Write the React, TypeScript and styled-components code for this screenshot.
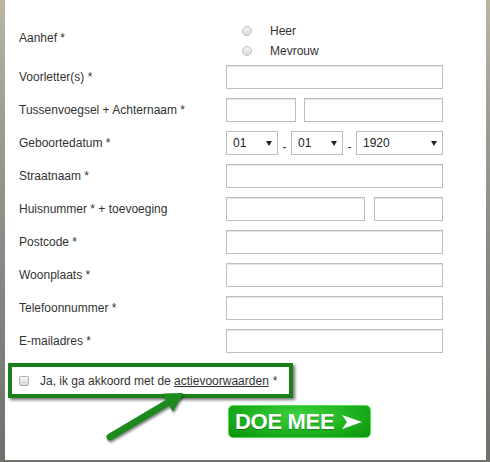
import styled, { createGlobalStyle } from "styled-components";

const GlobalStyle = createGlobalStyle`
  html, body {
    margin: 0;
    padding: 0;
  }
  body {
    width: 490px;
    height: 462px;
    overflow: hidden;
    background: linear-gradient(to bottom, #bab6a2 0%, #a09e92 25%, #8a8a85 55%, #6f6f6b 100%);
    font-family: "Liberation Sans", Arial, sans-serif;
  }
`;

const Panel = styled.form`
  margin-left: 5px;
  width: 481px;
  height: 460px;
  background: #fff;
  padding-top: 21px;
  box-sizing: border-box;
`;

const Row = styled.div<{ $tall?: boolean }>`
  display: flex;
  align-items: ${(p) => (p.$tall ? "flex-start" : "center")};
  margin-left: 14px;
  margin-bottom: ${(p) => (p.$tall ? "4px" : "9px")};
  height: ${(p) => (p.$tall ? "40px" : "24px")};
`;

const Label = styled.label<{ $tall?: boolean }>`
  width: 207px;
  font-size: 12px;
  line-height: 14px;
  color: #333;
  padding-top: ${(p) => (p.$tall ? "10px" : "0")};
`;

const Field = styled.div<{ $gap?: number }>`
  display: flex;
  align-items: center;
  width: 217px;
  gap: ${(p) => p.$gap ?? 8}px;
`;

const RadioList = styled.div`
  display: flex;
  flex-direction: column;
  padding-left: 16px;
`;

const RadioLine = styled.label`
  display: flex;
  align-items: center;
  height: 20px;
  gap: 18px;
  font-size: 12px;
  color: #333;
`;

const RadioDot = styled.span`
  width: 10px;
  height: 10px;
  border-radius: 50%;
  box-sizing: border-box;
  border: 1px solid #c2c2c2;
  background: linear-gradient(to bottom, #f4f4f4, #dadada);
`;

const TextInput = styled.input<{ $w?: number }>`
  width: ${(p) => (p.$w ? `${p.$w}px` : "100%")};
  height: 24px;
  box-sizing: border-box;
  border: 1px solid #bdbdbd;
  box-shadow: inset 0 1px 0 #e6e6e6;
  padding: 0 5px;
  font: 12px "Liberation Sans", Arial, sans-serif;
  outline: none;
  flex: none;
`;

const SelectWrap = styled.div<{ $w: number }>`
  position: relative;
  width: ${(p) => p.$w}px;
  height: 24px;
  flex: none;
`;

const Select = styled.select`
  appearance: none;
  width: 100%;
  height: 24px;
  box-sizing: border-box;
  border: 1px solid #bdbdbd;
  border-radius: 0;
  background: #fff;
  padding: 0 0 0 6px;
  font: 12px "Liberation Sans", Arial, sans-serif;
  color: #222;
  outline: none;
`;

const Caret = styled.span`
  position: absolute;
  right: 6px;
  top: 10px;
  width: 0;
  height: 0;
  border-left: 3px solid transparent;
  border-right: 3px solid transparent;
  border-top: 5px solid #222;
  pointer-events: none;
`;

const Dash = styled.span`
  width: 5px;
  text-align: center;
  font-size: 12px;
  color: #333;
  padding-top: 8px;
`;

const AgreeBox = styled.label`
  display: flex;
  align-items: center;
  margin: 10px 0 0 3px;
  width: 285px;
  height: 35px;
  box-sizing: border-box;
  border: 4px solid #1b7f1b;
  box-shadow: 2px 2px 3px rgba(0, 0, 0, 0.55);
  padding-left: 7px;
  font-size: 12px;
  color: #333;
`;

const CheckSquare = styled.span`
  width: 10px;
  height: 10px;
  box-sizing: border-box;
  border: 1px solid #b0b0b0;
  border-radius: 2px;
  background: linear-gradient(to bottom, #f6f6f6, #d8d8d8);
  margin-right: 11px;
`;

const TermsLink = styled.a`
  color: #333;
  text-decoration: underline;
  margin-right: 4px;
`;

const BottomRow = styled.div`
  display: flex;
  align-items: flex-start;
`;

const Pointer = styled.svg`
  margin: -10px 0 0 95px;
  flex: none;
  filter: drop-shadow(1px 2px 1px rgba(0, 0, 0, 0.45));
`;

const SubmitButton = styled.button`
  display: flex;
  align-items: center;
  gap: 8px;
  margin: 7px 0 0 38px;
  width: 143px;
  height: 33px;
  box-sizing: border-box;
  padding: 0 0 0 6px;
  border: 1px solid #55dc55;
  border-radius: 5px;
  background: radial-gradient(ellipse at 50% 30%, #3fd23f 0%, #1fb21f 55%, #0a920a 100%);
  color: #fff;
  font: bold 22px "Liberation Sans", Arial, sans-serif;
  letter-spacing: -0.3px;
  text-shadow: 0 1px 1px rgba(0, 0, 0, 0.3);
  cursor: pointer;
`;

const fields = [
  { label: "Straatnaam *" },
  { label: "Huisnummer * + toevoeging", split: [139, 69] },
  { label: "Postcode *" },
  { label: "Woonplaats *" },
  { label: "Telefoonnummer *" },
  { label: "E-mailadres *" },
];

export default function App() {
  return (
    <>
      <GlobalStyle />
      <Panel onSubmit={(e) => e.preventDefault()}>
        <Row $tall>
          <Label $tall>Aanhef *</Label>
          <RadioList>
            <RadioLine>
              <RadioDot />
              Heer
            </RadioLine>
            <RadioLine>
              <RadioDot />
              Mevrouw
            </RadioLine>
          </RadioList>
        </Row>
        <Row>
          <Label>Voorletter(s) *</Label>
          <Field>
            <TextInput />
          </Field>
        </Row>
        <Row>
          <Label>Tussenvoegsel + Achternaam *</Label>
          <Field>
            <TextInput $w={70} />
            <TextInput $w={139} />
          </Field>
        </Row>
        <Row>
          <Label>Geboortedatum *</Label>
          <Field $gap={4}>
            <SelectWrap $w={52}>
              <Select defaultValue="01">
                <option>01</option>
              </Select>
              <Caret />
            </SelectWrap>
            <Dash>-</Dash>
            <SelectWrap $w={52}>
              <Select defaultValue="01">
                <option>01</option>
              </Select>
              <Caret />
            </SelectWrap>
            <Dash>-</Dash>
            <SelectWrap $w={87}>
              <Select defaultValue="1920">
                <option>1920</option>
              </Select>
              <Caret />
            </SelectWrap>
          </Field>
        </Row>
        {fields.map((f) => (
          <Row key={f.label}>
            <Label>{f.label}</Label>
            <Field $gap={f.split ? 9 : 8}>
              {f.split ? (
                <>
                  <TextInput $w={f.split[0]} />
                  <TextInput $w={f.split[1]} />
                </>
              ) : (
                <TextInput />
              )}
            </Field>
          </Row>
        ))}
        <AgreeBox>
          <CheckSquare />
          Ja, ik ga akkoord met de&nbsp;
          <TermsLink href="#">actievoorwaarden</TermsLink>*
        </AgreeBox>
        <BottomRow>
          <Pointer width="90" height="56" viewBox="0 0 90 56">
            <line x1="10" y1="49" x2="69" y2="14" stroke="#1d8a1d" strokeWidth="7" strokeLinecap="round" />
            <polygon points="82,6 72.9,21.9 63.7,6.5" fill="#1d8a1d" stroke="#1d8a1d" strokeWidth="2" strokeLinejoin="round" />
          </Pointer>
          <SubmitButton type="submit">
            DOE MEE
            <svg width="20" height="14" viewBox="0 0 20 14">
              <polygon points="0,0 20,7 0,14 5,7" fill="#fff" />
            </svg>
          </SubmitButton>
        </BottomRow>
      </Panel>
    </>
  );
}
